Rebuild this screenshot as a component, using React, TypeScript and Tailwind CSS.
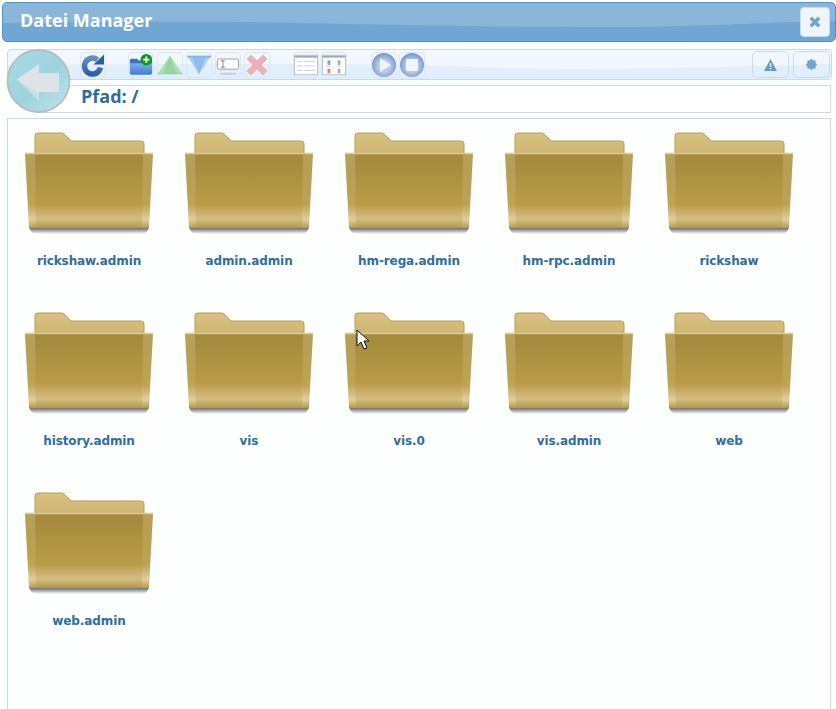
import { useId } from "react"

const folders = [
  "rickshaw.admin", "admin.admin", "hm-rega.admin", "hm-rpc.admin", "rickshaw",
  "history.admin", "vis", "vis.0", "vis.admin", "web",
  "web.admin",
]

const FolderIcon = () => {
  const id = useId()
  return (
    <svg width="128" height="104" viewBox="0 0 128 104" className="block">
      <defs>
        <linearGradient id={id + "tab"} x1="0" y1="0" x2="0" y2="1">
          <stop offset="0" stopColor="#d8c081" />
          <stop offset="1" stopColor="#cdb470" />
        </linearGradient>
        <linearGradient id={id + "front"} x1="0" y1="0" x2="0" y2="1">
          <stop offset="0" stopColor="#a48a3a" />
          <stop offset="0.2" stopColor="#a88e3e" />
          <stop offset="0.68" stopColor="#b99c48" />
          <stop offset="0.88" stopColor="#d6be82" />
          <stop offset="1" stopColor="#b2964a" />
        </linearGradient>
        <linearGradient id={id + "side"} x1="0" y1="0" x2="0" y2="1">
          <stop offset="0" stopColor="#e6d8a8" stopOpacity=".28" />
          <stop offset="0.7" stopColor="#e0cc90" stopOpacity=".14" />
          <stop offset="0.9" stopColor="#f0e4c0" stopOpacity=".4" />
          <stop offset="1" stopColor="#c2a95e" stopOpacity=".25" />
        </linearGradient>
        <linearGradient id={id + "shade"} x1="0" y1="0" x2="0" y2="1">
          <stop offset="0" stopColor="#404850" />
          <stop offset=".5" stopColor="#404850" stopOpacity=".55" />
          <stop offset="1" stopColor="#404850" stopOpacity="0" />
        </linearGradient>
      </defs>
      <path d="M10 24V4q0-3 3-3h23q2 0 3 1l7 7h70q3 0 3 3v14z" fill={"url(#" + id + "tab)"} stroke="#b59c58" strokeWidth="1" />
      <path d="M4 94h120v1q-2 7-7 7H11q-5 0-7-7z" fill={"url(#" + id + "shade)"} />
      <path d="M0 21h128l-4 73q0 2-3 2H7q-3 0-3-2z" fill={"url(#" + id + "front)"} />
      <path d="M0 21h10l1 75H7q-3 0-3-2z" fill={"url(#" + id + "side)"} />
      <path d="M128 21h-10l-1 75h4q3 0 3-2z" fill={"url(#" + id + "side)"} />
      <path d="M0 21.5h128" stroke="#dccb96" strokeWidth="1.5" />
    </svg>
  )
}

const ToolButton = ({ children }: { children: React.ReactNode }) => (
  <div className="flex h-[26px] w-[26px] shrink-0 items-center justify-center rounded-[4px] border border-[#dbe8f5]">
    {children}
  </div>
)

const RefreshIcon = () => {
  const id = useId()
  return (
    <svg width="24" height="24" viewBox="0 0 24 24">
      <defs>
        <linearGradient id={id} x1="0" y1="0" x2="0" y2="1">
          <stop offset="0" stopColor="#5f8fce" />
          <stop offset="1" stopColor="#2f5ea6" />
        </linearGradient>
      </defs>
      <path d="M16.5 6.8A8 8 0 1 0 19.4 14.5" fill="none" stroke={"url(#" + id + ")"} strokeWidth="5.5" />
      <path d="M12.5 11.5H23V1.500z" fill="#2f5ea6" />
    </svg>
  )
}

const NewFolderIcon = () => {
  const id = useId()
  return (
    <svg width="27" height="24" viewBox="0 0 27 24">
      <defs>
        <linearGradient id={id} x1="0" y1="0" x2="0" y2="1">
          <stop offset="0" stopColor="#7aaeea" />
          <stop offset="1" stopColor="#3f7ecf" />
        </linearGradient>
      </defs>
      <path d="M1 7q0-2 2-2h6l2 2h13q2 0 2 2v3H1z" fill="#3a74bc" />
      <path d="M1 10h25v11q0 2-2 2H3q-2 0-2-2z" fill={"url(#" + id + ")"} />
      <circle cx="19.5" cy="6" r="6.5" fill="#0c9a1c" />
      <path d="M19.5 2.5v7M16 6h7" stroke="#fff" strokeWidth="2" />
    </svg>
  )
}

const UpIcon = () => (
  <svg width="26" height="20" viewBox="0 0 26 20">
    <path d="M13 0 26 19H0z" fill="#a9e0ae" />
    <path d="M13 0 20 19H6z" fill="#98d49f" />
    <path d="M0 19h26v1H0z" fill="#8cc894" />
  </svg>
)

const DownIcon = () => (
  <svg width="26" height="20" viewBox="0 0 26 20">
    <path d="M0 0h26L13 20z" fill="#a8cdf3" />
    <path d="M6 1h14L13 20z" fill="#8fbcec" />
    <path d="M0 0h26v2H0z" fill="#84b6ea" />
  </svg>
)

const RenameIcon = () => (
  <svg width="26" height="24" viewBox="0 0 26 24">
    <rect x="1.5" y="5.5" width="23" height="11" rx="2" fill="#fff" stroke="#999" />
    <path d="M5.500 7.500h4M5.500 14.500h4M7.500 7.500v7" stroke="#666" strokeWidth=".8" />
    <ellipse cx="13" cy="21.5" rx="10" ry="1" fill="#c2ccd6" />
  </svg>
)

const DeleteIcon = () => (
  <svg width="22" height="22" viewBox="0 0 22 22">
    <path d="M5 1 11 7l6-6 4 4-6 6 6 6-4 4-6-6-6 6-4-4 6-6-6-6z" fill="#eeb0b0" stroke="#dfa0a0" strokeWidth=".6" />
  </svg>
)

const ListIcon = () => (
  <svg width="26" height="24" viewBox="0 0 26 24">
    <rect x=".5" y="1.5" width="25" height="21" fill="#fff" stroke="#b8c0ca" />
    <rect x="1" y="2" width="24" height="2" fill="#a0a8b2" />
    <path d="M3 8h6M11 8h12M3 13h6M11 13h12M3 18h6M11 18h12" stroke="#c8ccd0" />
  </svg>
)

const GridIcon = () => (
  <svg width="26" height="24" viewBox="0 0 26 24">
    <rect x=".5" y="1.5" width="25" height="21" fill="#fff" stroke="#b8c0ca" />
    <rect x="1" y="2" width="24" height="2" fill="#a0a8b2" />
    <rect x="6" y="7" width="3" height="5" fill="#7aa4dc" />
    <rect x="17" y="7" width="3" height="5" fill="#7cc48c" />
    <rect x="6" y="16" width="3" height="5" fill="#e88080" />
    <rect x="17" y="16" width="3" height="5" fill="#b0b0b0" />
    <path d="M5 13.500h5M16 13.500h5" stroke="#d4d4d4" />
  </svg>
)

const PlayStop = ({ stop }: { stop?: boolean }) => {
  const id = useId()
  return (
    <svg width="24" height="24" viewBox="0 0 24 24">
      <defs>
        <radialGradient id={id} cx="50%" cy="55%" r="55%">
          <stop offset="0.45" stopColor="#b8cbeb" />
          <stop offset="1" stopColor="#7592cc" />
        </radialGradient>
      </defs>
      <circle cx="12" cy="12" r="12" fill={"url(#" + id + ")"} />
      {stop ? <rect x="6" y="6" width="12" height="12" rx="1" fill="#f0f4fb" /> : <path d="M8 5l11 7-11 7z" fill="#f0f4fb" />}
    </svg>
  )
}

const BackButton = () => {
  const id = useId()
  return (
    <svg width="66" height="66" viewBox="0 0 66 66" className="absolute left-[5px] top-[48px]">
      <defs>
        <linearGradient id={id} x1="0" y1="0" x2="1" y2="1">
          <stop offset="0" stopColor="#a6dce6" />
          <stop offset="0.55" stopColor="#9ed3de" />
          <stop offset="1" stopColor="#bfe6ec" />
        </linearGradient>
      </defs>
      <circle cx="33.5" cy="33" r="31" fill={"url(#" + id + ")"} stroke="#b9bcbe" strokeWidth="1.8" />
      <path d="M12 31 34 16v9h20v19H34v9z" fill="#dde3e6" />
      <path d="M12 31 34 47v6z" fill="#c4dfe4" />
    </svg>
  )
}

const Cursor = () => (
  <svg width="14" height="21" viewBox="0 0 14 21" className="absolute left-[356px] top-[329px]">
    <path d="M1 1v16l4-4 3 7 3-1-3-7h5z" fill="#fff" stroke="#111" strokeWidth="1" />
  </svg>
)

const App = () => {
  return (
    <div className="relative h-[709px] w-[836px] overflow-hidden bg-white font-['DejaVu_Sans',sans-serif] text-[#2e6e9e]">
      <div className="relative ml-[2px] mt-[2px] flex h-[40px] w-[834px] items-center justify-between overflow-hidden rounded-[5px] border border-[#4297d7] bg-[#8ab6da] pl-[17px] pr-[5px]">
        <svg width="834" height="40" viewBox="0 0 834 40" preserveAspectRatio="none" className="absolute left-0 top-0">
          <path d="M0 20C120 19 220 18 300 20S500 24 600 24 740 20 834 18V40H0z" fill="#70a6d2" />
        </svg>
        <span className="relative pb-[4px] font-['Open_Sans',sans-serif] text-[18px] font-bold text-white">Datei Manager</span>
        <div className="relative flex h-[30px] w-[30px] items-center justify-center rounded-[4px] border border-[#c5dbec] bg-[#eef5fb]">
          <svg width="12" height="12" viewBox="0 0 12 12">
            <path d="M3 .5 6 3.500l3-3L11.500 3l-3 3 3 3L9 11.500l-3-3-3 3L.5 9l3-3-3-3z" fill="#6da5d0" />
          </svg>
        </div>
      </div>

      <div className="relative ml-[7px] mt-[7px] flex h-[31px] w-[825px] items-center overflow-hidden rounded-[4px] border border-[#c5dbec] bg-[#f2f7fd] pl-[72px] pr-[1px]">
        <svg width="825" height="31" viewBox="0 0 825 31" preserveAspectRatio="none" className="absolute left-0 top-0">
          <path d="M0 15C200 14 360 13 470 17S660 18 825 14V31H0z" fill="#e1eefb" />
        </svg>
        <div className="relative flex items-center">
          <ToolButton><RefreshIcon /></ToolButton>
          <div className="ml-[22px] flex gap-[3px]">
            <ToolButton><NewFolderIcon /></ToolButton>
            <ToolButton><UpIcon /></ToolButton>
            <ToolButton><DownIcon /></ToolButton>
            <ToolButton><RenameIcon /></ToolButton>
            <ToolButton><DeleteIcon /></ToolButton>
          </div>
          <div className="ml-[23px] flex gap-[2px]">
            <ToolButton><ListIcon /></ToolButton>
            <ToolButton><GridIcon /></ToolButton>
          </div>
          <div className="ml-[24px] flex gap-[2px]">
            <ToolButton><PlayStop /></ToolButton>
            <ToolButton><PlayStop stop /></ToolButton>
          </div>
        </div>
        <div className="relative ml-auto flex gap-[4px]">
          <div className="flex h-[27px] w-[37px] items-center justify-center rounded-[5px] border border-[#c5dbec]">
            <svg width="13" height="12" viewBox="0 0 13 12">
              <path d="M6.500 0 13 12H0z" fill="#5f9bcc" />
              <path d="M5.700 4h1.600v4H5.700zM5.700 9h1.600v1.500H5.700z" fill="#e4effa" />
            </svg>
          </div>
          <div className="flex h-[27px] w-[37px] items-center justify-center rounded-[5px] border border-[#c5dbec]">
            <svg width="11" height="11" viewBox="0 0 10 10">
              <circle cx="5" cy="5" r="3" fill="none" stroke="#6da5d0" strokeWidth="2.4" />
              <path d="M5 0v10M0 5h10M1.500 1.500l7 7M8.500 1.500l-7 7" stroke="#6da5d0" strokeWidth="1.500" />
            </svg>
          </div>
        </div>
      </div>

      <div className="ml-[36px] mt-[5px] flex h-[28px] w-[795px] items-center border border-[#c5dbec] pb-[5px] pl-[44px] font-['Open_Sans',sans-serif] text-[18px] font-bold">
        Pfad: /
      </div>

      <div className="ml-[7px] mt-[5px] grid h-[600px] w-[824px] grid-cols-[repeat(5,160px)] auto-rows-[180px] border border-b-0 border-[#c5dbec] bg-[#fdfefe] pl-[1px]">
        {folders.map((name) => (
          <div key={name} className="flex flex-col items-center pt-[13px]">
            <FolderIcon />
            <div className="mt-[16px] text-[12px] font-bold leading-[18px] tracking-[-0.1px]">{name}</div>
          </div>
        ))}
      </div>

      <BackButton />
      <Cursor />
    </div>
  )
}

export default App
